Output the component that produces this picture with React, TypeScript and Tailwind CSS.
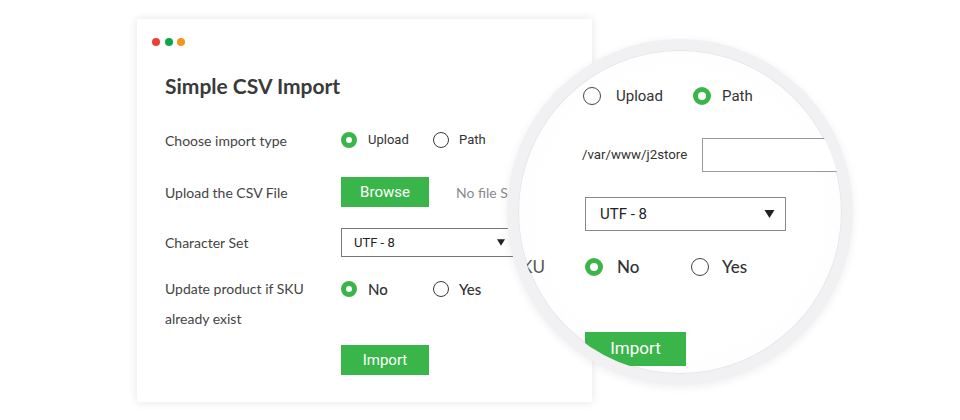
import React from "react";

function RadioSm({ checked }: { checked?: boolean }) {
  return checked ? (
    <span className="block w-[16px] h-[16px] rounded-full border-[5px] border-[#3ab54a] bg-white shrink-0" />
  ) : (
    <span className="block w-[16px] h-[16px] rounded-full border-[1.3px] border-[#3a3a3a] bg-white shrink-0" />
  );
}

function RadioLg({ checked }: { checked?: boolean }) {
  return checked ? (
    <span className="block w-[18px] h-[18px] rounded-full border-[5px] border-[#3ab54a] bg-white shrink-0" />
  ) : (
    <span className="block w-[18px] h-[18px] rounded-full border-[1.5px] border-[#444] bg-white shrink-0" />
  );
}

function Tri({ w, h }: { w: number; h: number }) {
  return (
    <svg width={w} height={h} viewBox="0 0 10 8" className="shrink-0">
      <path d="M0 0 H10 L5 8 Z" fill="#222" />
    </svg>
  );
}

export default function App() {
  return (
    <div className="relative w-[960px] h-[420px] bg-white overflow-hidden pt-[19px] font-['Lato',sans-serif]">
      {/* Card */}
      <div className="ml-[137px] w-[455px] h-[383px] bg-white shadow-[0_0_9px_rgba(0,0,0,0.11)] pt-[19px]">
        <div className="flex gap-[4.5px] pl-[15px]">
          <span className="block w-[8px] h-[8px] rounded-full bg-[#ee4035]" />
          <span className="block w-[8px] h-[8px] rounded-full bg-[#10a64b]" />
          <span className="block w-[8px] h-[8px] rounded-full bg-[#f7941d]" />
        </div>
        <h1 className="mt-[27px] pl-[28px] text-[21px] leading-[26px] font-bold text-[#3a3a3a]">
          Simple CSV Import
        </h1>
        <div className="mt-[26px] pl-[28px] grid grid-cols-[176px_1fr] text-[14px] text-[#444]">
          {/* Row 1 */}
          <div className="h-[30px] flex items-center">Choose import type</div>
          <div className="h-[30px] flex items-center font-['Roboto',sans-serif] text-[13px] text-[#333]">
            <div className="w-[92px] flex items-center gap-[11px]">
              <RadioSm checked />
              <span>Upload</span>
            </div>
            <div className="flex items-center gap-[10px]">
              <RadioSm />
              <span>Path</span>
            </div>
          </div>
          {/* Row 2 */}
          <div className="mt-[22px] h-[30px] flex items-center">Upload the CSV File</div>
          <div className="mt-[22px] h-[30px] flex items-center">
            <div className="w-[88px] h-[30px] bg-[#3ab54a] text-white font-['Roboto',sans-serif] text-[15px] flex items-center justify-center">
              Browse
            </div>
            <span className="ml-[27px] text-[#8a8a8a] whitespace-nowrap">No file Selected</span>
          </div>
          {/* Row 3 */}
          <div className="mt-[21px] h-[29px] flex items-center">Character Set</div>
          <div className="mt-[21px] h-[29px] flex items-center">
            <div className="w-[175px] h-[29px] border border-[#777] flex items-center justify-between pl-[12px] pr-[10px] font-['Roboto',sans-serif] text-[13px] text-[#222]">
              <span>UTF - 8</span>
              <Tri w={8} h={7} />
            </div>
          </div>
          {/* Row 4 */}
          <div className="mt-[17px] leading-[30px]">
            Update product if SKU
            <br />
            already exist
          </div>
          <div className="mt-[17px] h-[30px] flex items-center text-[15px] text-[#333] font-medium">
            <div className="w-[92px] flex items-center gap-[11px]">
              <RadioSm checked />
              <span>No</span>
            </div>
            <div className="flex items-center gap-[10px]">
              <RadioSm />
              <span>Yes</span>
            </div>
          </div>
          {/* Row 5 */}
          <div className="col-start-2 mt-[11px]">
            <div className="w-[88px] h-[30px] bg-[#3ab54a] text-white font-['Roboto',sans-serif] text-[15px] flex items-center justify-center">
              Import
            </div>
          </div>
        </div>
      </div>

      {/* Magnifier lens */}
      <div className="absolute left-[507px] top-[39px] w-[346px] h-[346px] rounded-full bg-[#f1f1f3] shadow-[0_2px_10px_rgba(0,0,0,0.07)] p-[11px]">
        <div className="w-[324px] h-[324px] rounded-full overflow-hidden bg-[radial-gradient(circle,#ffffff_0%,#ffffff_60%,#f9f9f9_100%)] shadow-[inset_0_0_0_1px_#e6e6e8] pt-[37px] pl-[65px]">
          {/* Row 1 */}
          <div className="h-[18px] flex items-center font-['Roboto',sans-serif] text-[15px] text-[#333]">
            <div className="w-[110px] shrink-0 flex items-center gap-[15px]">
              <RadioLg />
              <span>Upload</span>
            </div>
            <div className="flex items-center gap-[11px]">
              <RadioLg checked />
              <span>Path</span>
            </div>
          </div>
          {/* Row 2 */}
          <div className="mt-[33px] h-[34px] flex items-center -ml-[1px]">
            <span className="w-[120px] shrink-0 font-['Roboto',sans-serif] text-[13.3px] text-[#333] whitespace-nowrap">
              /var/www/j2store
            </span>
            <div className="w-[200px] h-[34px] shrink-0 border border-[#999] bg-white" />
          </div>
          {/* Row 3 */}
          <div className="mt-[25px] ml-[2px] w-[201px] h-[34px] border border-[#888] flex items-center justify-between pl-[14px] pr-[10px] font-['Roboto',sans-serif] text-[15px] text-[#222]">
            <span>UTF - 8</span>
            <Tri w={11} h={8} />
          </div>
          {/* Row 4 */}
          <div className="mt-[27px] h-[18px] flex items-center text-[17px] text-[#333]">
            <div className="w-0 shrink-0 flex justify-end">
              <span className="whitespace-nowrap mr-[38px] text-[#555]">Update product if SKU</span>
            </div>
            <div className="ml-[2px] w-[106px] shrink-0 flex items-center gap-[14px] font-medium">
              <RadioLg checked />
              <span>No</span>
            </div>
            <div className="flex items-center gap-[13px] font-medium">
              <RadioLg />
              <span>Yes</span>
            </div>
          </div>
          {/* Row 5 */}
          <div className="mt-[56px] ml-[2px] w-[101px] h-[34px] bg-[#3ab54a] text-white font-['Roboto',sans-serif] text-[17px] flex items-center justify-center">
            Import
          </div>
        </div>
      </div>
    </div>
  );
}
